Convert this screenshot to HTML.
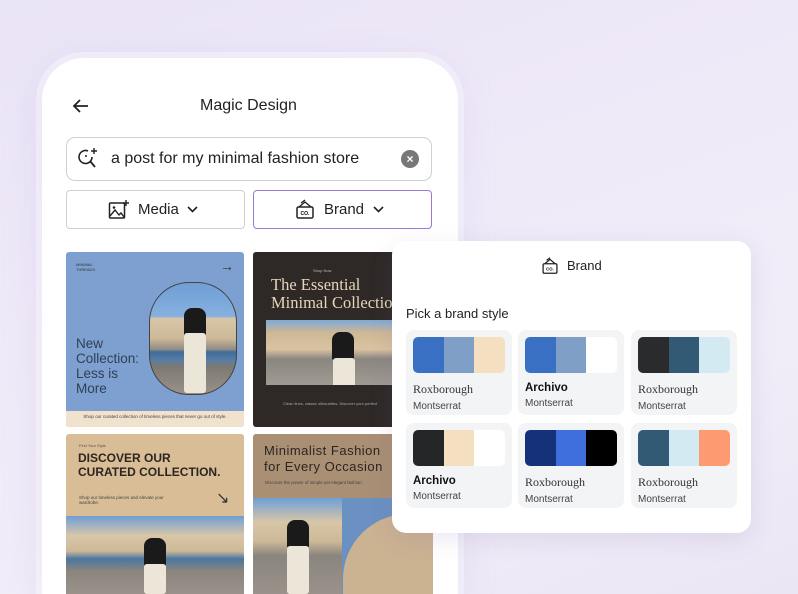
<!DOCTYPE html><html style="width:798px;height:594px;overflow:hidden"><head><style>
*{box-sizing:border-box;margin:0;padding:0}
body{width:798px;height:594px;overflow:hidden;position:relative;font-family:"Liberation Sans",sans-serif;background:linear-gradient(160deg,#e9e3f6 0%,#efeaf8 40%,#f1edf8 70%,#ebe6f4 100%)}
.phone{position:absolute;left:42px;top:58px;width:416px;height:536px;background:#fff;border-radius:42px 42px 0 0;box-shadow:0 0 0 6px rgba(255,255,255,.35),0 10px 40px rgba(170,150,220,.2)}
.abs{position:absolute}
.photo{position:absolute;overflow:hidden;background:linear-gradient(180deg,#6f9ed6 0%,#86b0df 30%,#d8c6a8 32%,#cdb998 50%,#8f8a84 60%,#3f6d9a 62%,#5a7ea4 70%,#7c7872 75%,#9a928a 100%)}
.fig{position:absolute;width:22px;background:#1a1a1a;border-radius:8px 8px 2px 2px}
.fig2{position:absolute;background:#ece6d8;border-radius:3px}
.sw{display:flex;height:36px;border-radius:5px;overflow:hidden}
.sw div{flex:1}
.card{position:absolute;width:106px;height:85px;background:#f3f4f6;border-radius:8px;padding:7px 7px}
.card .t1{font-family:"Liberation Serif",serif;font-size:12px;color:#333;margin-top:9px}
.card .t1.b{font-family:"Liberation Sans",sans-serif;font-weight:bold;font-size:11.5px;color:#111}
.card .t2{font-size:10px;color:#444;margin-top:4px}
</style></head><body>
<div class="phone"></div>
<svg class="abs" style="left:72px;top:98px" width="18" height="16" viewBox="0 0 18 16"><path d="M16 8H2M8 2L2 8l6 6" stroke="#222" stroke-width="1.8" fill="none"/></svg>
<div class="abs" style="left:200px;top:97px;font-size:16px;color:#222">Magic Design</div>
<div class="abs" style="left:66px;top:137px;width:366px;height:44px;border:1px solid #cfcfd4;border-radius:9px"></div>
<svg class="abs" style="left:77px;top:147px" width="24" height="24" viewBox="0 0 24 24"><path d="M15 10a6.5 6.5 0 1 1-4-6" stroke="#222" stroke-width="1.6" fill="none"/><path d="M13 14l5 6" stroke="#222" stroke-width="1.8"/><path d="M17 1v6M14 4h6" stroke="#222" stroke-width="1.4"/><circle cx="9" cy="9" r="1" fill="#222"/></svg>
<div class="abs" style="left:111px;top:150px;font-size:16px;color:#222">a post for my minimal fashion store</div>
<div class="abs" style="left:401px;top:150px;width:18px;height:18px;border-radius:50%;background:#777;color:#fff;font-size:12px;text-align:center;line-height:18px;font-weight:bold">×</div>
<div class="abs" style="left:66px;top:190px;width:179px;height:39px;border:1px solid #cfcfd4;border-radius:4px"></div>
<svg class="abs" style="left:108px;top:199px" width="22" height="21" viewBox="0 0 22 21"><rect x="1.5" y="4" width="15" height="15" rx="1" stroke="#222" stroke-width="1.5" fill="none"/><path d="M2 17l5-6 4 5 2-2 3 4" stroke="#222" stroke-width="1.4" fill="none"/><circle cx="6" cy="8.5" r="1.3" fill="#222"/><path d="M18 1v6M15 4h6" stroke="#222" stroke-width="1.4"/></svg>
<div class="abs" style="left:138px;top:201px;font-size:15px;color:#222">Media</div>
<svg class="abs" style="left:187px;top:206px" width="11" height="7"><path d="M1 1l4.5 4.5L10 1" stroke="#222" stroke-width="1.6" fill="none"/></svg>
<div class="abs" style="left:253px;top:190px;width:179px;height:39px;border:1.5px solid #9b7ad6;border-radius:4px"></div>
<svg class="abs" style="left:295px;top:198px" width="20" height="22" viewBox="0 0 20 22"><rect x="2" y="9" width="16" height="11" rx="1.5" stroke="#222" stroke-width="1.5" fill="none"/><path d="M4 9l6-5 6 5M6 5l4-3" stroke="#222" stroke-width="1.4" fill="none"/><text x="10" y="17" font-size="5" text-anchor="middle" font-family="Liberation Sans" font-weight="bold">CO.</text></svg>
<div class="abs" style="left:324px;top:201px;font-size:15px;color:#222">Brand</div>
<svg class="abs" style="left:373px;top:206px" width="11" height="7"><path d="M1 1l4.5 4.5L10 1" stroke="#222" stroke-width="1.6" fill="none"/></svg>

<div class="abs" style="left:66px;top:252px;width:178px;height:175px;background:#7ea0d0;border-radius:3px;overflow:hidden">
<div class="abs" style="left:10px;top:10px;font-size:4px;color:#333;line-height:5px">MINIMAL<br>THREADS</div>
<div class="abs" style="left:154px;top:6px;font-size:14px;color:#333">→</div>
<div class="abs" style="left:10px;top:84px;font-size:13.5px;color:#2f3f55;line-height:15px">New<br>Collection:<br>Less is<br>More</div>
<div class="photo" style="left:83px;top:30px;width:88px;height:113px;border-radius:40px;border:1px solid #444">
<div class="fig" style="left:34px;top:25px;height:30px"></div><div class="fig2" style="left:34px;top:50px;width:22px;height:60px"></div></div>
<div class="abs" style="left:0;top:159px;width:178px;height:16px;background:#f0e2cc;font-size:4.5px;color:#444;text-align:center;padding-top:3px">Shop our curated collection of timeless pieces that never go out of style.</div>
</div>
<div class="abs" style="left:253px;top:252px;width:150px;height:175px;background:#2e2826;border-radius:3px;overflow:hidden">
<div class="abs" style="left:60px;top:16px;font-size:4px;color:#bbb">Shop Now</div>
<div class="abs" style="left:18px;top:24px;font-family:'Liberation Serif',serif;font-size:16.5px;color:#e6d6b8;line-height:18px;white-space:nowrap">The Essential<br>Minimal Collection</div>
<div class="photo" style="left:13px;top:68px;width:150px;height:65px;background:linear-gradient(180deg,#7fa9d8 0%,#cfb894 20%,#d9c3a1 45%,#8a8680 60%,#a09a92 100%)">
<div class="fig" style="left:66px;top:12px;height:28px"></div><div class="fig2" style="left:67px;top:38px;width:22px;height:30px"></div></div>
<div class="abs" style="left:30px;top:149px;font-size:4px;color:#aaa;white-space:nowrap">Clean lines, classic silhouettes. Discover your perfect</div>
</div>
<div class="abs" style="left:66px;top:434px;width:178px;height:160px;background:#d9bd97;border-radius:3px 3px 0 0;overflow:hidden">
<div class="abs" style="left:13px;top:9px;font-size:4px;color:#555">Find Your Style</div>
<div class="abs" style="left:12px;top:17px;font-size:12px;font-weight:bold;color:#2b2520;line-height:14px">DISCOVER OUR<br>CURATED COLLECTION.</div>
<div class="abs" style="left:13px;top:61px;font-size:4.5px;color:#444">Shop our timeless pieces and elevate your<br>wardrobe.</div>
<div class="abs" style="left:150px;top:54px;font-size:16px;color:#333">↘</div>
<div class="photo" style="left:0;top:82px;width:178px;height:78px;background:linear-gradient(180deg,#6e9fd6 0%,#d8c6a8 25%,#cdb998 45%,#4b76a0 55%,#8a857e 70%,#9a928a 100%)">
<div class="fig" style="left:78px;top:22px;height:28px"></div><div class="fig2" style="left:78px;top:48px;width:22px;height:30px"></div></div>
</div>
<div class="abs" style="left:253px;top:434px;width:180px;height:160px;background:#a98f74;border-radius:3px 3px 0 0;overflow:hidden">
<div class="abs" style="left:11px;top:9px;font-size:13px;color:#2b2520;line-height:16px;white-space:nowrap;letter-spacing:.5px">Minimalist Fashion<br>for Every Occasion</div>
<div class="abs" style="left:12px;top:46px;font-size:4.5px;color:#444;white-space:nowrap">Discover the power of simple yet elegant fashion</div>
<div class="abs" style="left:0;top:64px;width:180px;height:96px;background:#6b90c2"></div>
<div class="photo" style="left:0;top:64px;width:89px;height:96px;background:linear-gradient(180deg,#6e9fd6 0%,#d8c6a8 25%,#cdb998 45%,#8a857e 60%,#9a928a 100%)">
<div class="fig" style="left:34px;top:22px;height:28px"></div><div class="fig2" style="left:34px;top:48px;width:22px;height:48px"></div></div>
<div class="abs" style="left:90px;top:80px;width:130px;height:80px;border-radius:65px 65px 0 0;background:#cbb291"></div>
</div>

<div class="abs" style="left:392px;top:241px;width:359px;height:292px;background:#fff;border-radius:14px;box-shadow:0 6px 24px rgba(120,100,170,.15)"></div>
<svg class="abs" style="left:541px;top:256px" width="18" height="19" viewBox="0 0 20 22"><rect x="2" y="9" width="16" height="11" rx="1.5" stroke="#222" stroke-width="1.5" fill="none"/><path d="M4 9l6-5 6 5M6 5l4-3" stroke="#222" stroke-width="1.4" fill="none"/><text x="10" y="17" font-size="5" text-anchor="middle" font-family="Liberation Sans" font-weight="bold">CO.</text></svg>
<div class="abs" style="left:567px;top:258px;font-size:13px;color:#222">Brand</div>
<div class="abs" style="left:406px;top:306px;font-size:13px;color:#222">Pick a brand style</div>

<div class="card" style="left:406px;top:330px"><div class="sw"><div style="background:#3a70c4"></div><div style="background:#809fc7"></div><div style="background:#f5dfc1"></div></div><div class="t1">Roxborough</div><div class="t2">Montserrat</div></div>
<div class="card" style="left:518px;top:330px"><div class="sw"><div style="background:#3a70c4"></div><div style="background:#809fc7"></div><div style="background:#fff"></div></div><div class="t1 b">Archivo</div><div class="t2">Montserrat</div></div>
<div class="card" style="left:631px;top:330px"><div class="sw"><div style="background:#2a2b2d"></div><div style="background:#335a74"></div><div style="background:#d3eaf3"></div></div><div class="t1">Roxborough</div><div class="t2">Montserrat</div></div>
<div class="card" style="left:406px;top:423px"><div class="sw"><div style="background:#252628"></div><div style="background:#f5dfc1"></div><div style="background:#fff"></div></div><div class="t1 b">Archivo</div><div class="t2">Montserrat</div></div>
<div class="card" style="left:518px;top:423px"><div class="sw"><div style="background:#14317a"></div><div style="background:#3e6fdc"></div><div style="background:#000"></div></div><div class="t1">Roxborough</div><div class="t2">Montserrat</div></div>
<div class="card" style="left:631px;top:423px"><div class="sw"><div style="background:#335a74"></div><div style="background:#d3eaf3"></div><div style="background:#fd9a72"></div></div><div class="t1">Roxborough</div><div class="t2">Montserrat</div></div>
</body></html>
